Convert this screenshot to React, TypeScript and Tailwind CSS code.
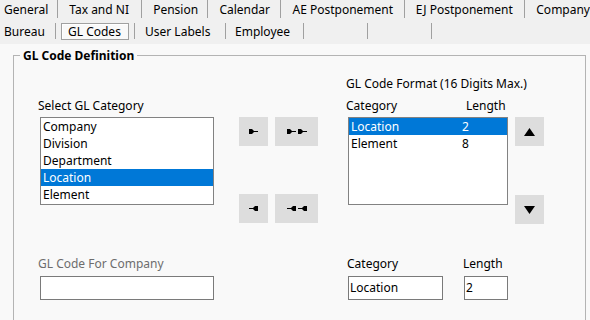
import React from 'react';

function Sep({ row }: { row: 1 | 2 }) {
  return row === 1 ? (
    <span className="w-px h-[18px] bg-[#a0a0a0] shrink-0" />
  ) : (
    <span className="w-px h-[16px] mt-[3px] bg-[#a0a0a0] shrink-0" />
  );
}

function ArrowIcon({ flip }: { flip?: boolean }) {
  return (
    <svg width="9" height="5" viewBox="0 0 9 5" className={flip ? 'scale-x-[-1]' : ''}>
      <path d="M0 0H3L5 2H9V3H5L3 5H0Z" fill="#000" />
    </svg>
  );
}

function ShiftButton({ double, flip }: { double?: boolean; flip?: boolean }) {
  return (
    <button
      className={
        double
          ? 'w-[43px] h-[29px] bg-[#dddddd] flex items-center justify-center gap-[2px]'
          : 'w-[29px] h-[29px] bg-[#dddddd] flex items-center justify-center'
      }
    >
      <ArrowIcon flip={flip} />
      {double && <ArrowIcon flip={flip} />}
    </button>
  );
}

function Triangle({ down }: { down?: boolean }) {
  return (
    <svg width="11" height="8" viewBox="0 0 11 8">
      {down ? <path d="M0 0H11L5.5 8Z" fill="#000" /> : <path d="M5.5 0L11 8H0Z" fill="#000" />}
    </svg>
  );
}

const categories = ['Company', 'Division', 'Department', 'Location', 'Element'];
const format = [
  { name: 'Location', len: '2' },
  { name: 'Element', len: '8' },
];

export default function App() {
  return (
    <div className="w-[590px] h-[320px] overflow-hidden bg-[#f9f9f9] font-['Noto_Sans',sans-serif] text-[12px] leading-[16px] text-black">
      {/* Tab strip */}
      <div className="h-[44px] bg-[#f0f0f0] whitespace-nowrap">
        <div className="h-[20px] flex items-start">
          <span className="w-[58px] pl-[4px] pt-[2px]">General</span>
          <Sep row={1} />
          <span className="w-[84px] pl-[11px] pt-[2px]">Tax and NI</span>
          <Sep row={1} />
          <span className="w-[66px] pl-[11px] pt-[2px]">Pension</span>
          <Sep row={1} />
          <span className="w-[73px] pl-[11px] pt-[2px]">Calendar</span>
          <Sep row={1} />
          <span className="w-[124px] pl-[11px] pt-[2px]">AE Postponement</span>
          <Sep row={1} />
          <span className="w-[121px] pl-[11px] pt-[2px]">EJ Postponement</span>
          <Sep row={1} />
          <span className="pl-[11px] pt-[2px]">Company</span>
        </div>
        <div className="h-[24px] flex items-start">
          <span className="w-[55px] pl-[4px] pt-[4px]">Bureau</span>
          <Sep row={2} />
          <span className="w-[78px] pt-[3px]">
            <span className="ml-[5px] block w-[68px] h-[17px] border border-[#a0a0a0] bg-[#f9f9f9] shadow-[inset_1px_1px_0_#ffffff] pl-[6px] leading-[15px]">
              GL Codes
            </span>
          </span>
          <Sep row={2} />
          <span className="w-[90px] pl-[10px] pt-[4px]">User Labels</span>
          <Sep row={2} />
          <span className="w-[77px] pl-[9px] pt-[4px]">Employee</span>
          <Sep row={2} />
          <span className="w-[63px]" />
          <Sep row={2} />
          <span className="w-[63px]" />
          <Sep row={2} />
        </div>
      </div>

      {/* Group box */}
      <div className="relative ml-[13px] mt-[11px] w-[573px] h-[300px] border border-[#b4b4b4]">
        <span className="absolute -top-[8px] left-[6px] px-[3px] bg-[#f9f9f9] font-bold">GL Code Definition</span>

        <div className="flex items-start pt-[20px] pl-[24px]">
          {/* Category source list */}
          <div className="w-[176px] pt-[22px]">
            <div>Select GL Category</div>
            <div className="mt-[3px] ml-[2px] w-[174px] h-[88px] border border-[#828282] bg-white">
              {categories.map((c) => (
                <div
                  key={c}
                  className={
                    c === 'Location'
                      ? 'h-[17px] leading-[17px] pl-[2px] bg-[#0078d7] text-white'
                      : 'h-[17px] leading-[17px] pl-[2px]'
                  }
                >
                  {c}
                </div>
              ))}
            </div>
          </div>

          {/* Move buttons */}
          <div className="ml-[25px] pt-[41px]">
            <div className="flex gap-[7px]">
              <ShiftButton />
              <ShiftButton double />
            </div>
            <div className="flex gap-[7px] mt-[48px]">
              <ShiftButton flip />
              <ShiftButton double flip />
            </div>
          </div>

          {/* Format list */}
          <div className="ml-[28px] w-[169px] whitespace-nowrap">
            <div>GL Code Format (16 Digits Max.)</div>
            <div className="flex mt-[6px]">
              <span className="w-[120px]">Category</span>
              <span>Length</span>
            </div>
            <div className="mt-[3px] ml-[2px] w-[160px] h-[88px] border border-[#828282] bg-white">
              {format.map((f, i) => (
                <div
                  key={f.name}
                  className={
                    i === 0
                      ? 'flex h-[17px] leading-[17px] pl-[2px] bg-[#0078d7] text-white'
                      : 'flex h-[17px] leading-[17px] pl-[2px]'
                  }
                >
                  <span className="w-[111px]">{f.name}</span>
                  <span>{f.len}</span>
                </div>
              ))}
            </div>
          </div>

          {/* Up / down */}
          <div className="pt-[41px]">
            <button className="w-[29px] h-[29px] bg-[#dddddd] flex items-center justify-center">
              <Triangle />
            </button>
            <button className="mt-[49px] w-[29px] h-[29px] bg-[#dddddd] flex items-center justify-center">
              <Triangle down />
            </button>
          </div>
        </div>

        {/* Bottom fields */}
        <div className="flex items-start mt-[32px] pl-[24px]">
          <div className="w-[176px]">
            <div className="text-[#6d6d6d]">GL Code For Company</div>
            <div className="mt-[4px] ml-[2px] w-[174px] h-[24px] border border-[#7a7a7a] bg-white" />
          </div>
          <div className="ml-[133px] w-[116px]">
            <div>Category</div>
            <div className="mt-[4px] ml-[1px] w-[95px] h-[24px] border border-[#7a7a7a] bg-white pl-[1px] leading-[22px]">
              Location
            </div>
          </div>
          <div>
            <div>Length</div>
            <div className="mt-[4px] ml-[1px] w-[44px] h-[24px] border border-[#7a7a7a] bg-white pl-[1px] leading-[22px]">
              2
            </div>
          </div>
        </div>
      </div>
    </div>
  );
}
